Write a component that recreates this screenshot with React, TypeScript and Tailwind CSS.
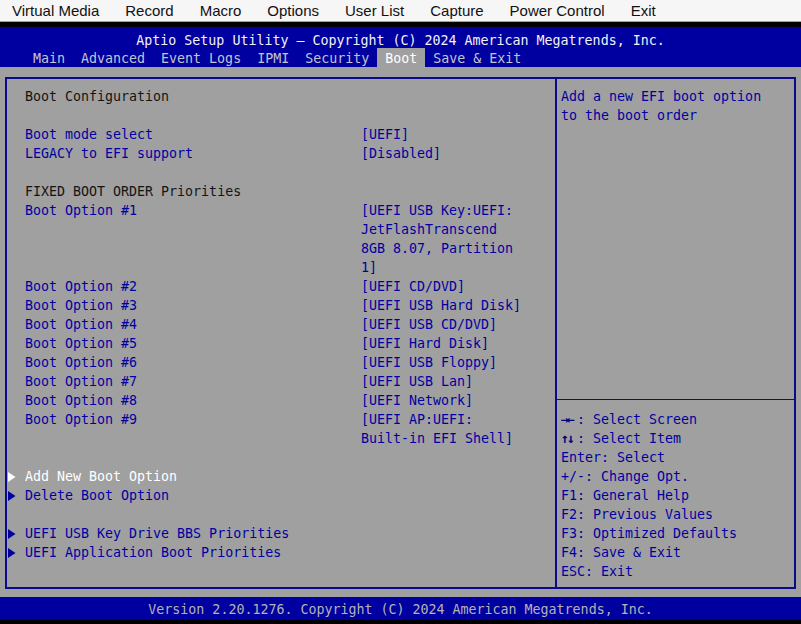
const mono = { fontFamily: '"DejaVu Sans Mono", "Liberation Mono", monospace' };

const menus = ['Virtual Media', 'Record', 'Macro', 'Options', 'User List', 'Capture', 'Power Control', 'Exit'];
const tabs = ['Main', 'Advanced', 'Event Logs', 'IPMI', 'Security', 'Boot', 'Save & Exit'];

type Row = { label?: string; value?: string; kind?: 'head' | 'item' | 'sub' | 'subsel' };

const rows: Row[] = [
  { label: 'Boot Configuration', kind: 'head' },
  {},
  { label: 'Boot mode select', value: '[UEFI]', kind: 'item' },
  { label: 'LEGACY to EFI support', value: '[Disabled]', kind: 'item' },
  {},
  { label: 'FIXED BOOT ORDER Priorities', kind: 'head' },
  { label: 'Boot Option #1', value: '[UEFI USB Key:UEFI:', kind: 'item' },
  { value: 'JetFlashTranscend', kind: 'item' },
  { value: '8GB 8.07, Partition', kind: 'item' },
  { value: '1]', kind: 'item' },
  { label: 'Boot Option #2', value: '[UEFI CD/DVD]', kind: 'item' },
  { label: 'Boot Option #3', value: '[UEFI USB Hard Disk]', kind: 'item' },
  { label: 'Boot Option #4', value: '[UEFI USB CD/DVD]', kind: 'item' },
  { label: 'Boot Option #5', value: '[UEFI Hard Disk]', kind: 'item' },
  { label: 'Boot Option #6', value: '[UEFI USB Floppy]', kind: 'item' },
  { label: 'Boot Option #7', value: '[UEFI USB Lan]', kind: 'item' },
  { label: 'Boot Option #8', value: '[UEFI Network]', kind: 'item' },
  { label: 'Boot Option #9', value: '[UEFI AP:UEFI:', kind: 'item' },
  { value: 'Built-in EFI Shell]', kind: 'item' },
  {},
  { label: 'Add New Boot Option', kind: 'subsel' },
  { label: 'Delete Boot Option', kind: 'sub' },
  {},
  { label: 'UEFI USB Key Drive BBS Priorities', kind: 'sub' },
  { label: 'UEFI Application Boot Priorities', kind: 'sub' },
];

const keys = [
  ['→←', ': Select Screen'],
  ['↑↓', ': Select Item'],
  ['', 'Enter: Select'],
  ['', '+/-: Change Opt.'],
  ['', 'F1: General Help'],
  ['', 'F2: Previous Values'],
  ['', 'F3: Optimized Defaults'],
  ['', 'F4: Save & Exit'],
  ['', 'ESC: Exit'],
];

function Arrow({ color }: { color: string }) {
  return (
    <svg width="8" height="12" viewBox="0 0 8 12">
      <polygon points="0,1 7.5,6 0,11" fill={color} />
    </svg>
  );
}

export default function App() {
  return (
    <div className="flex h-[624px] w-[801px] flex-col overflow-hidden bg-black">
      {/* viewer menu bar */}
      <div
        className="flex h-[22px] items-center gap-[26px] border-b border-[#8fa6c0] bg-[#f6f6f6] pt-[2px] pl-3 text-[15px] text-[#111]"
        style={{ fontFamily: '"Liberation Sans", Arial, sans-serif' }}
      >
        {menus.map((m) => (
          <span key={m}>{m}</span>
        ))}
      </div>
      <div className="h-[5px] bg-black" />

      <div className="flex flex-1 flex-col text-[13.3px] leading-[19px]" style={mono}>
        {/* header */}
        <div className="h-[40px] bg-[#0000a0]">
          <div className="flex h-[21px] items-end justify-center text-[#f2f2f2]">
            <span className="translate-y-[2px]">Aptio Setup Utility – Copyright (C) 2024 American Megatrends, Inc.</span>
          </div>
          <div className="flex h-[19px] pl-[25px]">
            {tabs.map((t) => (
              <span
                key={t}
                className={`px-2 pt-[1px] whitespace-pre ${t === 'Boot' ? 'bg-[#a0a0a0] text-white' : 'text-[#c4c4d0]'}`}
              >
                {t}
              </span>
            ))}
          </div>
        </div>

        {/* body */}
        <div className="flex flex-1 flex-col bg-[#a0a0a0] px-[5px] pt-[10px] pb-[8px]">
          <div className="flex flex-1 border-2 border-[#0a0a8c]">
            <div className="w-[550px] border-r-2 border-[#0a0a8c] pt-[8px]">
              {rows.map((r, i) => (
                <div key={i} className="flex h-[19px] items-center whitespace-pre">
                  <span className="flex w-[18px] justify-start pl-[1px]">
                    {r.kind === 'subsel' && <Arrow color="#ffffff" />}
                    {r.kind === 'sub' && <Arrow color="#0000a0" />}
                  </span>
                  <span
                    className={`w-[336px] ${
                      r.kind === 'head' ? 'text-[#141414]' : r.kind === 'subsel' ? 'text-white' : 'text-[#0000a0]'
                    }`}
                  >
                    {r.label ?? ''}
                  </span>
                  <span className="text-[#0000a0]">{r.value ?? ''}</span>
                </div>
              ))}
            </div>
            <div className="flex flex-1 flex-col">
              <div className="flex-1 pt-[8px] pl-[4px] text-[#0000a0]">
                <div className="h-[19px]">Add a new EFI boot option</div>
                <div className="h-[19px]">to the boot order</div>
              </div>
              <div className="border-t border-[#0a0a8c] pt-[10px] pb-[6px] pl-[4px] text-[#0000a0]">
                {keys.map(([a, b], i) => (
                  <div key={i} className="flex h-[19px] items-center whitespace-pre">
                    {a && <span className="w-[16px] font-bold tracking-[-2px] text-[#00007a]">{a}</span>}
                    <span>{b}</span>
                  </div>
                ))}
              </div>
            </div>
          </div>
        </div>

        {/* footer */}
        <div className="flex h-[23px] items-center justify-center bg-[#0000a0] pt-[1px] text-[#b4b4b4]">
          Version 2.20.1276. Copyright (C) 2024 American Megatrends, Inc.
        </div>
        <div className="h-[4px] bg-black" />
      </div>
    </div>
  );
}
